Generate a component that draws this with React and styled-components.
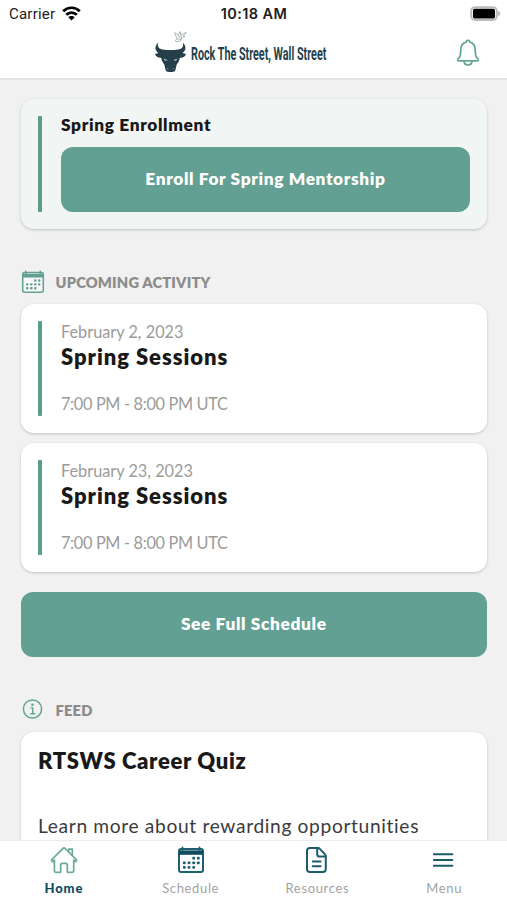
import React from 'react';
import styled, { createGlobalStyle } from 'styled-components';

const GREEN = '#62a093';
const NAVY = '#0d4c61';

const GlobalStyle = createGlobalStyle`
  * { box-sizing: border-box; }
  body { margin: 0; background: #f1f1f1; font-family: Lato, "Open Sans", sans-serif; }
`;

const Screen = styled.div`
  width: 507px;
  height: 900px;
  display: flex;
  flex-direction: column;
  overflow: hidden;
  background: #f1f1f1;
`;

const StatusBar = styled.div`
  height: 28px;
  flex: none;
  display: grid;
  grid-template-columns: 1fr auto 1fr;
  align-items: center;
  padding: 0 6px 0 9px;
  background: #fff;
  color: #1c1c1c;
  font: 400 15px/28px Roboto, Inter, sans-serif;
`;

const Carrier = styled.div`
  display: flex;
  align-items: center;
  gap: 7px;
  letter-spacing: 0.22px;

  svg { margin-bottom: 2px; }
`;

const Clock = styled.div`
  padding-right: 2px;
  font: 600 14.5px/28px Inter, sans-serif;
  letter-spacing: 0.4px;
`;

const BatterySlot = styled.div`
  display: flex;
  justify-content: flex-end;
  padding-bottom: 2px;
`;

const Header = styled.header`
  height: 52px;
  flex: none;
  display: grid;
  grid-template-columns: 1fr auto 1fr;
  align-items: center;
  padding-right: 27px;
  background: #fff;
  border-bottom: 2px solid #e5e5e5;
`;

const Brand = styled.div`
  grid-column: 2;
  display: flex;
  align-items: flex-start;
  gap: 4px;
  width: 173px;
  height: 46px;
`;

const BrandName = styled.span`
  width: 136px;
  margin-top: 13px;
  color: #233f4c;
  font: 700 17.5px/22px Roboto, sans-serif;
  white-space: nowrap;
  transform: scaleX(0.615);
  transform-origin: left center;
`;

const BellButton = styled.button`
  grid-column: 3;
  justify-self: end;
  display: flex;
  padding: 0;
  border: 0;
  background: none;
`;

const Content = styled.main`
  flex: 1;
  min-height: 0;
  overflow: hidden;
  display: flex;
  flex-direction: column;
  padding: 19px 20px 0 20.5px;
`;

const Card = styled.article`
  flex: none;
  display: flex;
  gap: 19px;
  height: ${(p) => p.$height || 129}px;
  padding: 17px 17px 17px 17.5px;
  border-radius: 13px;
  background: ${(p) => (p.$tinted ? '#f1f5f4' : '#fff')};
  box-shadow: 0 1px 3px rgba(0, 0, 0, 0.2);
`;

const Accent = styled.div`
  flex: none;
  width: 4px;
  border-radius: 1px;
  background: #5a9e8a;
`;

const CardBody = styled.div`
  flex: 1;
  display: flex;
  flex-direction: column;
  white-space: nowrap;
`;

const EnrollTitle = styled.h3`
  margin: -1px 0 12px;
  color: #181818;
  font-size: 17.3px;
  font-weight: 800;
  line-height: 20px;
  letter-spacing: 0.65px;
`;

const Button = styled.button`
  flex: none;
  width: 100%;
  height: 65px;
  padding: 0 0 1px;
  border: 0;
  border-radius: 12px;
  background: ${GREEN};
  color: #fff;
  font: 800 17.3px/20px Lato, sans-serif;
  letter-spacing: 0.63px;
`;

const SectionTitle = styled.h2`
  flex: none;
  display: flex;
  align-items: center;
  gap: 11px;
  height: 23px;
  margin: 41px 0 11px;
  color: #8c8c8c;
  font-size: 14.7px;
  font-weight: 800;
  letter-spacing: 0.16px;
`;

const SessionList = styled.div`
  flex: none;
  display: flex;
  flex-direction: column;
  gap: 10px;
  margin-bottom: 20px;
`;

const Meta = styled.span`
  color: #9b9b9b;
  font-size: 16.3px;
  line-height: 20px;
  letter-spacing: ${(p) => (p.$time ? '-0.33px' : '0')};
`;

const CardTitle = styled.h3`
  margin: 0;
  color: #191919;
  font-size: 22px;
  font-weight: 800;
  line-height: 28px;
  letter-spacing: 0.65px;
`;

const SessionTitle = styled(CardTitle)`
  margin: 1px 0 23px;
  letter-spacing: 0.95px;
`;

const SessionBody = styled(CardBody)`
  padding-top: 1px;
`;

const FeedCard = styled(Card)`
  padding-top: 15px;
`;

const FeedText = styled.p`
  margin: 37px 0 0;
  color: #3b3b3b;
  font-size: 19.2px;
  line-height: 28px;
  letter-spacing: 0.65px;
`;

const TabBar = styled.nav`
  flex: none;
  height: 60px;
  display: grid;
  grid-template-columns: repeat(4, 1fr);
  background: #fff;
  border-top: 1px solid #ebebeb;
`;

const Tab = styled.a`
  display: flex;
  flex-direction: column;
  align-items: center;
  gap: 5px;
  padding: 5px 0 0 1px;
  color: ${(p) => (p.$active ? NAVY : '#a3a3a3')};
  font-size: 13px;
  font-weight: ${(p) => (p.$active ? 900 : 400)};
  line-height: 18px;
  letter-spacing: ${(p) => (p.$active ? 0.9 : 0.65)}px;
`;

const Wifi = () => (
  <svg width="19" height="15" viewBox="0 0 19 15" fill="none" stroke="#000" strokeWidth="2.7">
    <path d="M1.2 5.2C5.8.6 13.2.6 17.8 5.2" />
    <path d="M4.2 8.8c3-2.9 7.6-2.9 10.6 0" />
    <path d="M6.3 11.2c1.7-1.7 4.7-1.7 6.4 0L9.5 14.4z" fill="#000" stroke="none" />
  </svg>
);

const Battery = () => (
  <svg width="31" height="15" viewBox="0 0 31 15">
    <rect x="1.2" y="1.2" width="25.6" height="12.8" rx="3.8" fill="#fff" stroke="#bbb" strokeWidth="2" />
    <rect x="3" y="2.8" width="22" height="9.6" rx="1.6" fill="#000" />
    <path d="M28.3 5c2.4.8 2.4 4.2 0 5z" fill="#aaa" />
  </svg>
);

const Bull = () => (
  <svg width="33" height="44" viewBox="0 0 33 44">
    <path
      fill="#253f4a"
      d="M4.2 12.5C.5 16.2.6 20.4 4.6 22.9L1 24.1c.8 2.7 3.2 4 6.1 3.7.5 3 2 5.1 3.4 7.2.4 2.2.7 4.3 1.6 6 1.5 1.4 7.3 1.4 8.8 0 .9-1.7 1.2-3.8 1.6-6 1.4-2.1 2.9-4.2 3.4-7.2 2.9.3 5.3-1 6.1-3.7l-3.6-1.2c4-2.5 4.1-6.7.4-10.4 1.2 4.2-.6 6.4-4.7 7-4.6.8-10.6.8-15.2 0-4.1-.6-5.9-2.8-4.7-7z"
    />
    <path d="M9.5 28.4l4.2 1.8-2.6.5zM23.5 28.4l-4.2 1.8 2.6.5z" fill="#c9d2d5" />
    <path d="M12.8 38.2l1.5 1M20.2 38.2l-1.5 1" stroke="#8d9fa6" strokeWidth=".8" />
    <g fill="none" stroke="#9ba3a4" strokeWidth=".8" strokeLinejoin="round">
      <path d="M20.6 2.6l3.5 2.1 2-3.2.7 3.7 5.6-3-3.2 3.7 2 .5-3.4 1.2-1.1 3.2-3.7 1-1.8-1 1.7-2.1z" />
      <path d="M24.1 4.7l1.8 3.5M26.8 5.2l.3 3.5M22.9 8.7l3.8 1" />
    </g>
  </svg>
);

const Bell = () => (
  <svg width="24" height="28" viewBox="0 0 24 28" fill="none" stroke="#62a58f" strokeWidth="1.7" strokeLinejoin="round">
    <path d="M10.2 3.1a1.8 1.8 0 013.6 0c3.3.8 5.3 3.6 5.4 7.2.1 4.1.3 6.5 1.2 8 .5.8 2 1.3 2 2.4 0 .8-.6 1.2-1.4 1.2H3c-.8 0-1.4-.4-1.4-1.2 0-1.1 1.5-1.6 2-2.4.9-1.5 1.1-3.9 1.2-8 .1-3.6 2.1-6.4 5.4-7.2z" />
    <path d="M8 22.1c.3 5 7.7 5 8 0" />
  </svg>
);

const dots = [[16.7, 12.2], [21.3, 12.2], [7.3, 16.8], [12, 16.8], [16.7, 16.8], [21.3, 16.8], [7.3, 21.3], [12, 21.3], [16.7, 21.3]];

const CalendarIcon = ({ color, size, head = color, weight = 1.8 }) => (
  <svg width={size} height={size} viewBox="0 0 28 28">
    <rect x="2" y="3" width="24" height="23" rx="2" fill="#fff" fillOpacity=".5" stroke={color} strokeWidth={weight} />
    <path d="M2 4.4h24v4.4H2z" fill={head} />
    <path d="M5.5 1.4v3M22.5 1.4v3" stroke={color} strokeWidth="1.8" strokeLinecap="round" />
    {dots.map(([x, y]) => (
      <rect key={`${x}-${y}`} x={x - 1.4} y={y - 1.4} width="2.8" height="2.8" rx=".9" fill={color} />
    ))}
  </svg>
);

const InfoIcon = () => (
  <svg width="24" height="23" viewBox="0 0 24 23" fill="none" stroke="#62a58f">
    <circle cx="11.5" cy="11" r="9.1" strokeWidth="1.5" />
    <circle cx="11.5" cy="6.7" r="1.3" fill="#62a58f" stroke="none" />
    <path d="M9.5 9.9h2.2v5.7M9.2 15.8h5" strokeWidth="1.4" />
  </svg>
);

const HomeIcon = () => (
  <svg width="28" height="28" viewBox="0 0 28 28" fill="none" stroke="#69aa96" strokeWidth="1.7" strokeLinejoin="round">
    <path d="M4.4 14.2l-1 .9a1.1 1.1 0 01-1.6-1.5L13 2.4c.7-.6 1.4-.6 2 0l3.7 3.6V3.2h3.6v6.4l4 4a1.1 1.1 0 01-1.6 1.5l-1-.9v10.6c0 1-.5 1.6-1.5 1.6h-3.9c-.6 0-1-.4-1-1v-6.3c0-1.1-.6-1.7-1.7-1.7h-3.2c-1.1 0-1.7.6-1.7 1.7v6.3c0 .6-.4 1-1 1H5.9c-1 0-1.5-.6-1.5-1.6z" />
    <path d="M18.7 6l3.6 3.6" />
  </svg>
);

const DocumentIcon = () => (
  <svg width="28" height="28" viewBox="0 0 28 28" fill="none" stroke="#1c5b6b" strokeWidth="2" strokeLinejoin="round" strokeLinecap="round">
    <path d="M15 2H6.9C5.2 2 4 3.2 4 4.9v18.2C4 24.8 5.2 26 6.9 26h13c1.7 0 2.9-1.2 2.9-2.9V10.3c0-.8-.2-1.3-.8-1.9l-5.2-5.5c-.5-.6-1.1-.9-1.8-.9z" />
    <path d="M14.2 2.3v5.9c0 1.6.8 2.4 2.4 2.4h5.9M9.8 15.6h7.8M9.8 20.2h7.8" />
  </svg>
);

const MenuIcon = () => (
  <svg width="28" height="28" viewBox="0 0 28 28" stroke="#1c5b6b" strokeWidth="2.1" strokeLinecap="round">
    <path d="M3.9 8.3h18.4M3.9 14h18.4M3.9 19.7h18.4" />
  </svg>
);

const sessions = [
  { date: 'February 2, 2023', title: 'Spring Sessions', time: '7:00 PM - 8:00 PM UTC' },
  { date: 'February 23, 2023', title: 'Spring Sessions', time: '7:00 PM - 8:00 PM UTC' },
];

const tabs = [
  { label: 'Home', icon: <HomeIcon />, active: true },
  { label: 'Schedule', icon: <CalendarIcon color="#1d6070" head="#104b5c" size={28} weight={2} /> },
  { label: 'Resources', icon: <DocumentIcon /> },
  { label: 'Menu', icon: <MenuIcon /> },
];

export default function App() {
  return (
    <Screen>
      <GlobalStyle />
      <StatusBar>
        <Carrier>Carrier<Wifi /></Carrier>
        <Clock>10:18 AM</Clock>
        <BatterySlot><Battery /></BatterySlot>
      </StatusBar>
      <Header>
        <Brand>
          <Bull />
          <BrandName>Rock The Street, Wall Street</BrandName>
        </Brand>
        <BellButton aria-label="Notifications"><Bell /></BellButton>
      </Header>
      <Content>
        <Card $tinted $height={130}>
          <Accent />
          <CardBody>
            <EnrollTitle>Spring Enrollment</EnrollTitle>
            <Button>Enroll For Spring Mentorship</Button>
          </CardBody>
        </Card>
        <SectionTitle>
          <CalendarIcon color={GREEN} size={24} />
          UPCOMING ACTIVITY
        </SectionTitle>
        <SessionList>
          {sessions.map((s) => (
            <Card key={s.date}>
              <Accent />
              <SessionBody>
                <Meta>{s.date}</Meta>
                <SessionTitle>{s.title}</SessionTitle>
                <Meta $time>{s.time}</Meta>
              </SessionBody>
            </Card>
          ))}
        </SessionList>
        <Button>See Full Schedule</Button>
        <SectionTitle>
          <InfoIcon />
          FEED
        </SectionTitle>
        <FeedCard $height={220}>
          <CardBody>
            <CardTitle>RTSWS Career Quiz</CardTitle>
            <FeedText>Learn more about rewarding opportunities</FeedText>
          </CardBody>
        </FeedCard>
      </Content>
      <TabBar>
        {tabs.map((t) => (
          <Tab key={t.label} $active={t.active}>
            {t.icon}
            {t.label}
          </Tab>
        ))}
      </TabBar>
    </Screen>
  );
}
